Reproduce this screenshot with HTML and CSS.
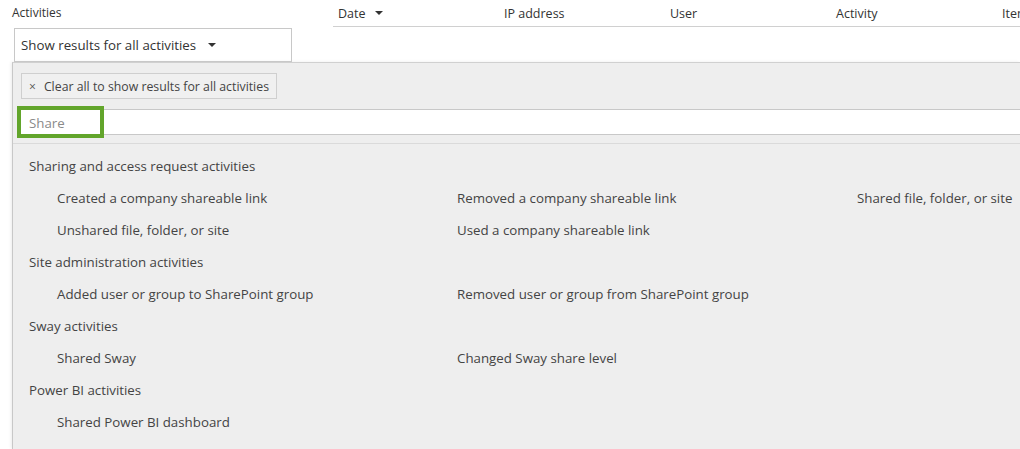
FILE: index.html
```html
<!DOCTYPE html>
<html lang="en">
<head>
    <meta charset="UTF-8">
    <title>Audit log search</title>
    <link rel="stylesheet" href="styles.css">
</head>
<body>
    <div class="top">
        <div class="filter">
            <div class="filter-label">Activities</div>
            <div class="dropdown">
                <span>Show results for all activities</span>
                <span class="caret"></span>
            </div>
        </div>
        <div class="table-head">
            <div class="col">Date <span class="caret small"></span></div>
            <div class="col">IP address</div>
            <div class="col">User</div>
            <div class="col">Activity</div>
            <div class="col">Item</div>
        </div>
    </div>

    <div class="panel">
        <div class="chip"><span class="chip-x">×</span>Clear all to show results for all activities</div>
        <div class="search">
            <input class="search-input" type="text" placeholder="Share">
            <div class="highlight"></div>
        </div>
        <div class="list">
            <div class="group">Sharing and access request activities</div>
            <div class="items">
                <div>Created a company shareable link</div>
                <div>Removed a company shareable link</div>
                <div>Shared file, folder, or site</div>
                <div>Unshared file, folder, or site</div>
                <div>Used a company shareable link</div>
            </div>
            <div class="group">Site administration activities</div>
            <div class="items">
                <div>Added user or group to SharePoint group</div>
                <div>Removed user or group from SharePoint group</div>
            </div>
            <div class="group">Sway activities</div>
            <div class="items">
                <div>Shared Sway</div>
                <div>Changed Sway share level</div>
            </div>
            <div class="group">Power BI activities</div>
            <div class="items">
                <div>Shared Power BI dashboard</div>
            </div>
        </div>
    </div>
</body>
</html>
```

FILE: styles.css
```css
body {
    margin: 0;
    font-family: 'Open Sans', 'Noto Sans', sans-serif;
    color: #333;
    background: white;
    overflow: hidden;
    width: 1020px;
    height: 449px;
}
.top {
    display: flex;
    height: 62px;
}
.filter {
    width: 333px;
    padding-left: 12px;
    box-sizing: border-box;
}
.filter-label {
    font-size: 12px;
    height: 28px;
    line-height: 26px;
    color: #333;
}
.dropdown {
    margin-left: 2px;
    width: 278px;
    height: 34px;
    box-sizing: border-box;
    border: 1px solid #c8c8c8;
    display: flex;
    align-items: center;
    padding-left: 6px;
    font-size: 13.3px;
    color: #333;
}
.caret {
    display: inline-block;
    margin-left: 12px;
    border-left: 4px solid transparent;
    border-right: 4px solid transparent;
    border-top: 4px solid #333;
    vertical-align: middle;
}
.caret.small {
    margin-left: 6px;
    margin-bottom: 3px;
}
.table-head {
    flex: 1;
    display: flex;
    height: 27px;
    border-bottom: 1px solid #d0d0d0;
    box-sizing: border-box;
    white-space: nowrap;
    overflow: hidden;
}
.col {
    width: 166px;
    flex-shrink: 0;
    padding-left: 5px;
    box-sizing: border-box;
    font-size: 12.5px;
    line-height: 28px;
    color: #333;
}
.panel {
    margin-left: 12px;
    height: 387px;
    background: #eeeeee;
    border-left: 1px solid #c8c8c8;
    border-top: 1px solid #d0d0d0;
    box-sizing: border-box;
    padding-top: 10px;
    box-shadow: -1px 0 3px rgba(0, 0, 0, 0.08);
}
.chip {
    display: inline-flex;
    align-items: center;
    margin-left: 8px;
    height: 26px;
    padding: 0 7px;
    border: 1px solid #cfcfcf;
    background: #f0f0f0;
    font-size: 12.3px;
    color: #444;
    box-sizing: border-box;
}
.chip-x {
    font-size: 12px;
    margin-right: 8px;
    color: #555;
}
.search {
    position: relative;
    margin-top: 10px;
    margin-left: 4px;
}
.search-input {
    display: block;
    width: 100%;
    height: 26px;
    box-sizing: border-box;
    border: none;
    border-top: 1px solid #c8c8c8;
    border-bottom: 1px solid #c8c8c8;
    background: white;
    padding: 2px 0 0 12px;
    font-family: inherit;
    font-size: 13.3px;
    outline: none;
}
.search-input::placeholder {
    color: #8a8a8a;
}
.highlight {
    position: absolute;
    left: 0;
    top: -3px;
    width: 87px;
    height: 32px;
    border: 4px solid #62a52b;
    box-sizing: border-box;
}
.list {
    margin-top: 8px;
    border-top: 1px solid #dadada;
    padding-top: 6px;
    padding-left: 16px;
}
.group {
    height: 32px;
    line-height: 32px;
    font-size: 13.3px;
    color: #444;
}
.items {
    display: grid;
    grid-template-columns: 400px 400px 400px;
    padding-left: 28px;
    font-size: 13.3px;
    color: #444;
    white-space: nowrap;
}
.items div {
    height: 32px;
    line-height: 32px;
}
```
